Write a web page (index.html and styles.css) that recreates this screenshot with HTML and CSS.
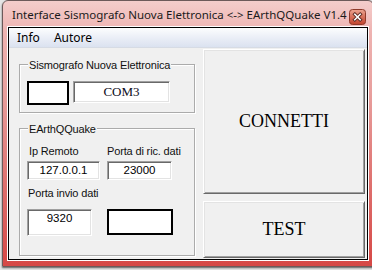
FILE: index.html
```html
<!DOCTYPE html>
<html lang="it">
<head>
  <meta charset="UTF-8">
  <meta name="viewport" content="width=device-width, initial-scale=1.0">
  <title>Interface Sismografo Nuova Elettronica</title>
  <link rel="stylesheet" href="styles.css">
</head>
<body>
  <div class="window">
    <div class="titlebar">
      <span class="title">Interface Sismografo Nuova Elettronica &lt;-&gt; EArthQQuake V1.4</span>
      <svg class="close" width="17" height="16" viewBox="0 0 17 16">
        <defs>
          <linearGradient id="closeBg" x1="0" y1="0" x2="0" y2="1">
            <stop offset="0" stop-color="#eca592"/>
            <stop offset="0.5" stop-color="#d8705a"/>
            <stop offset="1" stop-color="#c2432d"/>
          </linearGradient>
        </defs>
        <rect x="0.5" y="0.5" width="16" height="15" rx="3" fill="url(#closeBg)" stroke="#8e3a2a"/>
        <path d="M5.8 5.3 L11.2 10.7 M11.2 5.3 L5.8 10.7" stroke="#5b2a22" stroke-width="3.4" stroke-linecap="square"/>
        <path d="M5.8 5.3 L11.2 10.7 M11.2 5.3 L5.8 10.7" stroke="#fff" stroke-width="1.6" stroke-linecap="square"/>
      </svg>
    </div>

    <div class="client">
      <div class="menubar">
        <span class="menu-item">Info</span>
        <span class="menu-item">Autore</span>
      </div>

      <div class="form">
        <div class="left">
          <!-- porta seriale -->
          <div class="group group-serial">
            <span class="legend">Sismografo Nuova Elettronica</span>
            <div class="serial-row">
              <div class="box box-status"></div>
              <div class="field field-com">COM3</div>
            </div>
          </div>

          <!-- rete -->
          <div class="group group-net">
            <span class="legend">EArthQQuake</span>
            <div class="net-grid">
              <span class="lbl lbl-ip">Ip Remoto</span>
              <span class="lbl">Porta di ric. dati</span>
              <div class="field field-ip">127.0.0.1</div>
              <div class="field field-port">23000</div>
              <span class="lbl lbl-send">Porta invio dati</span>
              <div class="field field-send">9320</div>
              <div class="box box-send"></div>
            </div>
          </div>
        </div>

        <div class="right">
          <button class="btn btn-connect">CONNETTI</button>
          <button class="btn btn-test">TEST</button>
        </div>
      </div>
    </div>
  </div>
</body>
</html>
```

FILE: styles.css
```css
* {
  box-sizing: border-box;
}

body {
  margin: 0;
  width: 372px;
  height: 270px;
  overflow: hidden;
  background: #e6e6e6;
}

.window {
  display: flex;
  flex-direction: column;
  margin-left: 2px;
  width: 372px;
  height: 267px;
  padding: 0 5px 5px;
  border: 1px solid #6d5a5a;
  border-radius: 6px 6px 0 0;
  background: linear-gradient(#f4cdcb, #eeb3b1 12%, #e89f9d 35%, #de6f6d 70%, #d64846);
  box-shadow: 0 1px 2px rgba(0, 0, 0, 0.6);
}

.titlebar {
  display: flex;
  justify-content: space-between;
  align-items: flex-start;
  height: 26px;
  padding: 7px 2px 0 4px;
}

.title {
  min-width: 0;
  font-family: "Noto Sans", sans-serif;
  font-size: 11.5px;
  line-height: 14px;
  color: #1b1b1b;
  white-space: nowrap;
}

.close {
  flex-shrink: 0;
  margin-top: 1px;
}

.client {
  display: flex;
  flex-direction: column;
  height: 233px;
  border: 1px solid #000;
  box-shadow: 0 0 0 1px #fff;
  background: #f0f0f0;
}

.menubar {
  display: flex;
  gap: 14px;
  height: 20px;
  padding-left: 8px;
  background: linear-gradient(#fcfdfe, #e9edf6 55%, #dbe2f0);
  border-bottom: 1px solid #d6dbe4;
}

.menu-item {
  font-family: "Noto Sans", sans-serif;
  font-size: 12px;
  line-height: 19px;
  color: #000;
}

.form {
  display: flex;
  flex: 1;
}

.left {
  width: 186px;
  padding: 16px 0 0 10px;
}

.group {
  position: relative;
  width: 176px;
  border: 1px solid #ababab;
  box-shadow: inset 1px 1px 0 #fff, 1px 1px 0 #fff;
}

.legend {
  position: absolute;
  top: -6px;
  left: 8px;
  padding: 0 1px;
  background: #f0f0f0;
  font-family: "Liberation Sans", Arial, sans-serif;
  font-size: 11px;
  line-height: 13px;
  letter-spacing: -0.15px;
  color: #111;
  white-space: nowrap;
}

.group-serial {
  height: 49px;
  padding: 16px 0 0 7px;
}

.serial-row {
  display: flex;
  align-items: flex-start;
  gap: 4px;
}

.group-net {
  height: 128px;
  margin-top: 15px;
  padding: 16px 0 0 7px;
}

.net-grid {
  display: grid;
  grid-template-columns: 80px 66px;
  align-items: start;
}

.lbl {
  font-family: "Liberation Sans", Arial, sans-serif;
  font-size: 11px;
  line-height: 13px;
  letter-spacing: -0.15px;
  color: #111;
  white-space: nowrap;
  margin-bottom: 3px;
}

.lbl-ip {
  padding-left: 2px;
}

.lbl-send {
  grid-column: 1 / 3;
  margin: 7px 0 9px;
  padding-left: 1px;
}

.field {
  background: #fff;
  border: 1px solid;
  border-color: #a0a0a0 #fff #fff #a0a0a0;
  box-shadow: inset 1px 1px 0 #696969, inset -1px -1px 0 #e3e3e3;
  font-family: "Liberation Sans", Arial, sans-serif;
  font-size: 11.5px;
  color: #000;
  text-align: center;
}

.field-com {
  width: 97px;
  height: 22px;
  font-family: "Liberation Serif", "Times New Roman", serif;
  font-size: 13px;
  line-height: 20px;
  color: #0c0c20;
}

.field-ip {
  width: 73px;
  height: 19px;
  line-height: 17px;
}

.field-port {
  width: 65px;
  height: 19px;
  line-height: 17px;
}

.field-send {
  width: 65px;
  height: 27px;
  padding-top: 2px;
  line-height: 13px;
}

.box {
  background: #fff;
  border: 2px solid #000;
}

.box-status {
  width: 42px;
  height: 24px;
}

.box-send {
  width: 66px;
  height: 26px;
}

.right {
  display: flex;
  flex-direction: column;
  gap: 7px;
  width: 162px;
  margin-left: 8px;
  padding-top: 1px;
}

.btn {
  margin: 0;
  padding: 0;
  width: 162px;
  background: #f0f0f0;
  border: 1px solid;
  border-color: #fff #696969 #696969 #fff;
  box-shadow: inset 1px 1px 0 #e3e3e3, inset -1px -1px 0 #a0a0a0;
  font-family: "Liberation Serif", "Times New Roman", serif;
  font-size: 18px;
  color: #000;
}

.btn-connect {
  height: 145px;
}

.btn-test {
  height: 57px;
}
```
